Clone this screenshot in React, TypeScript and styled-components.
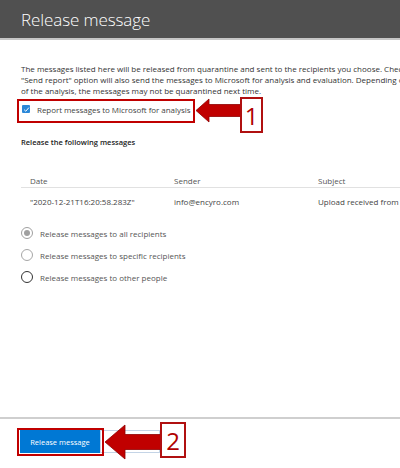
import React from "react";
import styled, { createGlobalStyle } from "styled-components";

const Global = createGlobalStyle`
  html, body { margin: 0; padding: 0; background: #fff; }
  body { font-family: "Open Sans", "Noto Sans", sans-serif; }
  *, *::before, *::after { box-sizing: border-box; }
`;

const Page = styled.div`
  position: relative;
  width: 400px;
  height: 468px;
  overflow: hidden;
  display: flex;
  flex-direction: column;
  background: #fff;
  color: #333;
`;

const Header = styled.header`
  height: 40px;
  flex: none;
  background: #505050;
  border-bottom: 2px solid #c6c6c6;
  display: flex;
  align-items: center;
  padding-left: 21px;
`;

const Title = styled.h1`
  margin: 0;
  font-size: 17px;
  font-weight: 300;
  color: #fff;
  letter-spacing: -0.1px;
`;

const Body = styled.main`
  flex: 1;
  min-height: 0;
  padding: 23px 0 0 21px;
  display: flex;
  flex-direction: column;
`;

const Intro = styled.p`
  margin: 0;
  font-size: 8px;
  line-height: 11px;
  color: #333;
`;

const Line = styled.span`
  display: block;
  white-space: nowrap;
`;

const CheckRow = styled.label`
  margin-top: 6px;
  display: flex;
  align-items: center;
  gap: 7px;
  height: 14px;
  font-size: 8px;
  letter-spacing: -0.05px;
  color: #444;
`;

const Check = styled.span`
  width: 8px;
  height: 8px;
  margin-left: 1px;
  background: #2b88d8;
  border-radius: 1px;
  display: flex;
  align-items: center;
  justify-content: center;
`;

const SectionTitle = styled.h2`
  margin: 21px 0 0;
  font-size: 7.5px;
  font-weight: 600;
  color: #222;
`;

const Table = styled.div`
  margin-top: 27px;
  width: 460px;
  font-size: 8px;
  color: #444;
`;

const TableRow = styled.div<{ $head?: boolean }>`
  display: grid;
  grid-template-columns: 144px 144px 1fr;
  padding-left: 9px;
  height: ${(p) => (p.$head ? "14px" : "26px")};
  align-items: center;
  white-space: nowrap;
  border-bottom: ${(p) => (p.$head ? "1px solid #e1e1e1" : "none")};
  color: ${(p) => (p.$head ? "#555" : "#444")};
`;

const Radios = styled.div`
  margin-top: 13px;
  display: flex;
  flex-direction: column;
  gap: 10px;
`;

const RadioRow = styled.label`
  display: flex;
  align-items: center;
  gap: 7px;
  height: 12px;
  font-size: 8px;
  color: #555;
`;

const Radio = styled.span<{ $tone: "checked" | "light" | "dark" }>`
  width: 12px;
  height: 12px;
  border-radius: 50%;
  border: 1px solid
    ${(p) => (p.$tone === "dark" ? "#333" : p.$tone === "light" ? "#a6a6a6" : "#a0a0a0")};
  display: flex;
  align-items: center;
  justify-content: center;
  &::after {
    content: "";
    width: 6px;
    height: 6px;
    border-radius: 50%;
    background: ${(p) => (p.$tone === "checked" ? "#a0a0a0" : "transparent")};
  }
`;

const Footer = styled.footer`
  flex: none;
  height: 51px;
  border-top: 2px solid #cfcfcf;
  padding: 11px 0 0 20px;
  display: flex;
  align-items: flex-start;
`;

const PrimaryButton = styled.button`
  width: 80px;
  height: 23px;
  border: none;
  background: #0078d4;
  color: #fff;
  font-family: inherit;
  font-size: 7.5px;
  padding: 0;
`;

const SecondaryButton = styled.button`
  width: 60px;
  height: 23px;
  border: 1px solid #c4d4e6;
  background: #fff;
  padding: 0;
`;

const Highlight = styled.div<{ $l: number; $t: number; $w: number; $h: number }>`
  position: absolute;
  left: ${(p) => p.$l}px;
  top: ${(p) => p.$t}px;
  width: ${(p) => p.$w}px;
  height: ${(p) => p.$h}px;
  border: 2px solid #c00000;
  pointer-events: none;
`;

const NumberBox = styled.div<{ $l: number; $t: number; $w: number }>`
  position: absolute;
  left: ${(p) => p.$l}px;
  top: ${(p) => p.$t}px;
  width: ${(p) => p.$w}px;
  height: 36px;
  border: 2px solid #b01010;
  background: #fff;
  color: #b00000;
  font-size: 24px;
  font-family: "Open Sans", sans-serif;
  display: flex;
  align-items: center;
  justify-content: center;
`;

const ArrowSvg = styled.svg`
  position: absolute;
  left: 0;
  top: 0;
  pointer-events: none;
`;

export default function App() {
  return (
    <>
      <Global />
      <Page>
        <Header>
          <Title>Release message</Title>
        </Header>
        <Body>
          <Intro>
            <Line>
              The messages listed here will be released from quarantine and sent to the recipients you choose. Checking the
            </Line>
            <Line>
              "Send report" option will also send the messages to Microsoft for analysis and evaluation. Depending on the results
            </Line>
            <Line>of the analysis, the messages may not be quarantined next time.</Line>
          </Intro>
          <CheckRow>
            <Check>
              <svg width="7" height="7" viewBox="0 0 8 8">
                <path d="M1.3 4.2 L3.2 6 L6.8 1.8" fill="none" stroke="#fff" strokeWidth="1.1" />
              </svg>
            </Check>
            Report messages to Microsoft for analysis
          </CheckRow>
          <SectionTitle>Release the following messages</SectionTitle>
          <Table>
            <TableRow $head>
              <span>Date</span>
              <span>Sender</span>
              <span>Subject</span>
            </TableRow>
            <TableRow>
              <span>"2020-12-21T16:20:58.283Z"</span>
              <span>info@encyro.com</span>
              <span>Upload received from Encyro</span>
            </TableRow>
          </Table>
          <Radios>
            <RadioRow>
              <Radio $tone="checked" />
              Release messages to all recipients
            </RadioRow>
            <RadioRow>
              <Radio $tone="light" />
              Release messages to specific recipients
            </RadioRow>
            <RadioRow>
              <Radio $tone="dark" />
              Release messages to other people
            </RadioRow>
          </Radios>
        </Body>
        <Footer>
          <PrimaryButton>Release message</PrimaryButton>
          <SecondaryButton />
        </Footer>

        <Highlight $l={17} $t={99} $w={178} $h={24} />
        <Highlight $l={17} $t={428} $w={87} $h={28} />
        <ArrowSvg width="400" height="468" viewBox="0 0 400 468">
          <path
            d="M196 110.5 L209 99 L209 104.5 L242 104.5 L242 116.5 L209 116.5 L209 122 Z"
            fill="#c00000"
            stroke="#8f0000"
            strokeWidth="0.8"
          />
          <path
            d="M105 442 L125 425 L125 434.5 L162 434.5 L162 449.5 L125 449.5 L125 459 Z"
            fill="#c00000"
            stroke="#8f0000"
            strokeWidth="0.8"
          />
        </ArrowSvg>
        <NumberBox $l={240} $t={97} $w={23}>1</NumberBox>
        <NumberBox $l={160} $t={422} $w={26}>2</NumberBox>
      </Page>
    </>
  );
}
